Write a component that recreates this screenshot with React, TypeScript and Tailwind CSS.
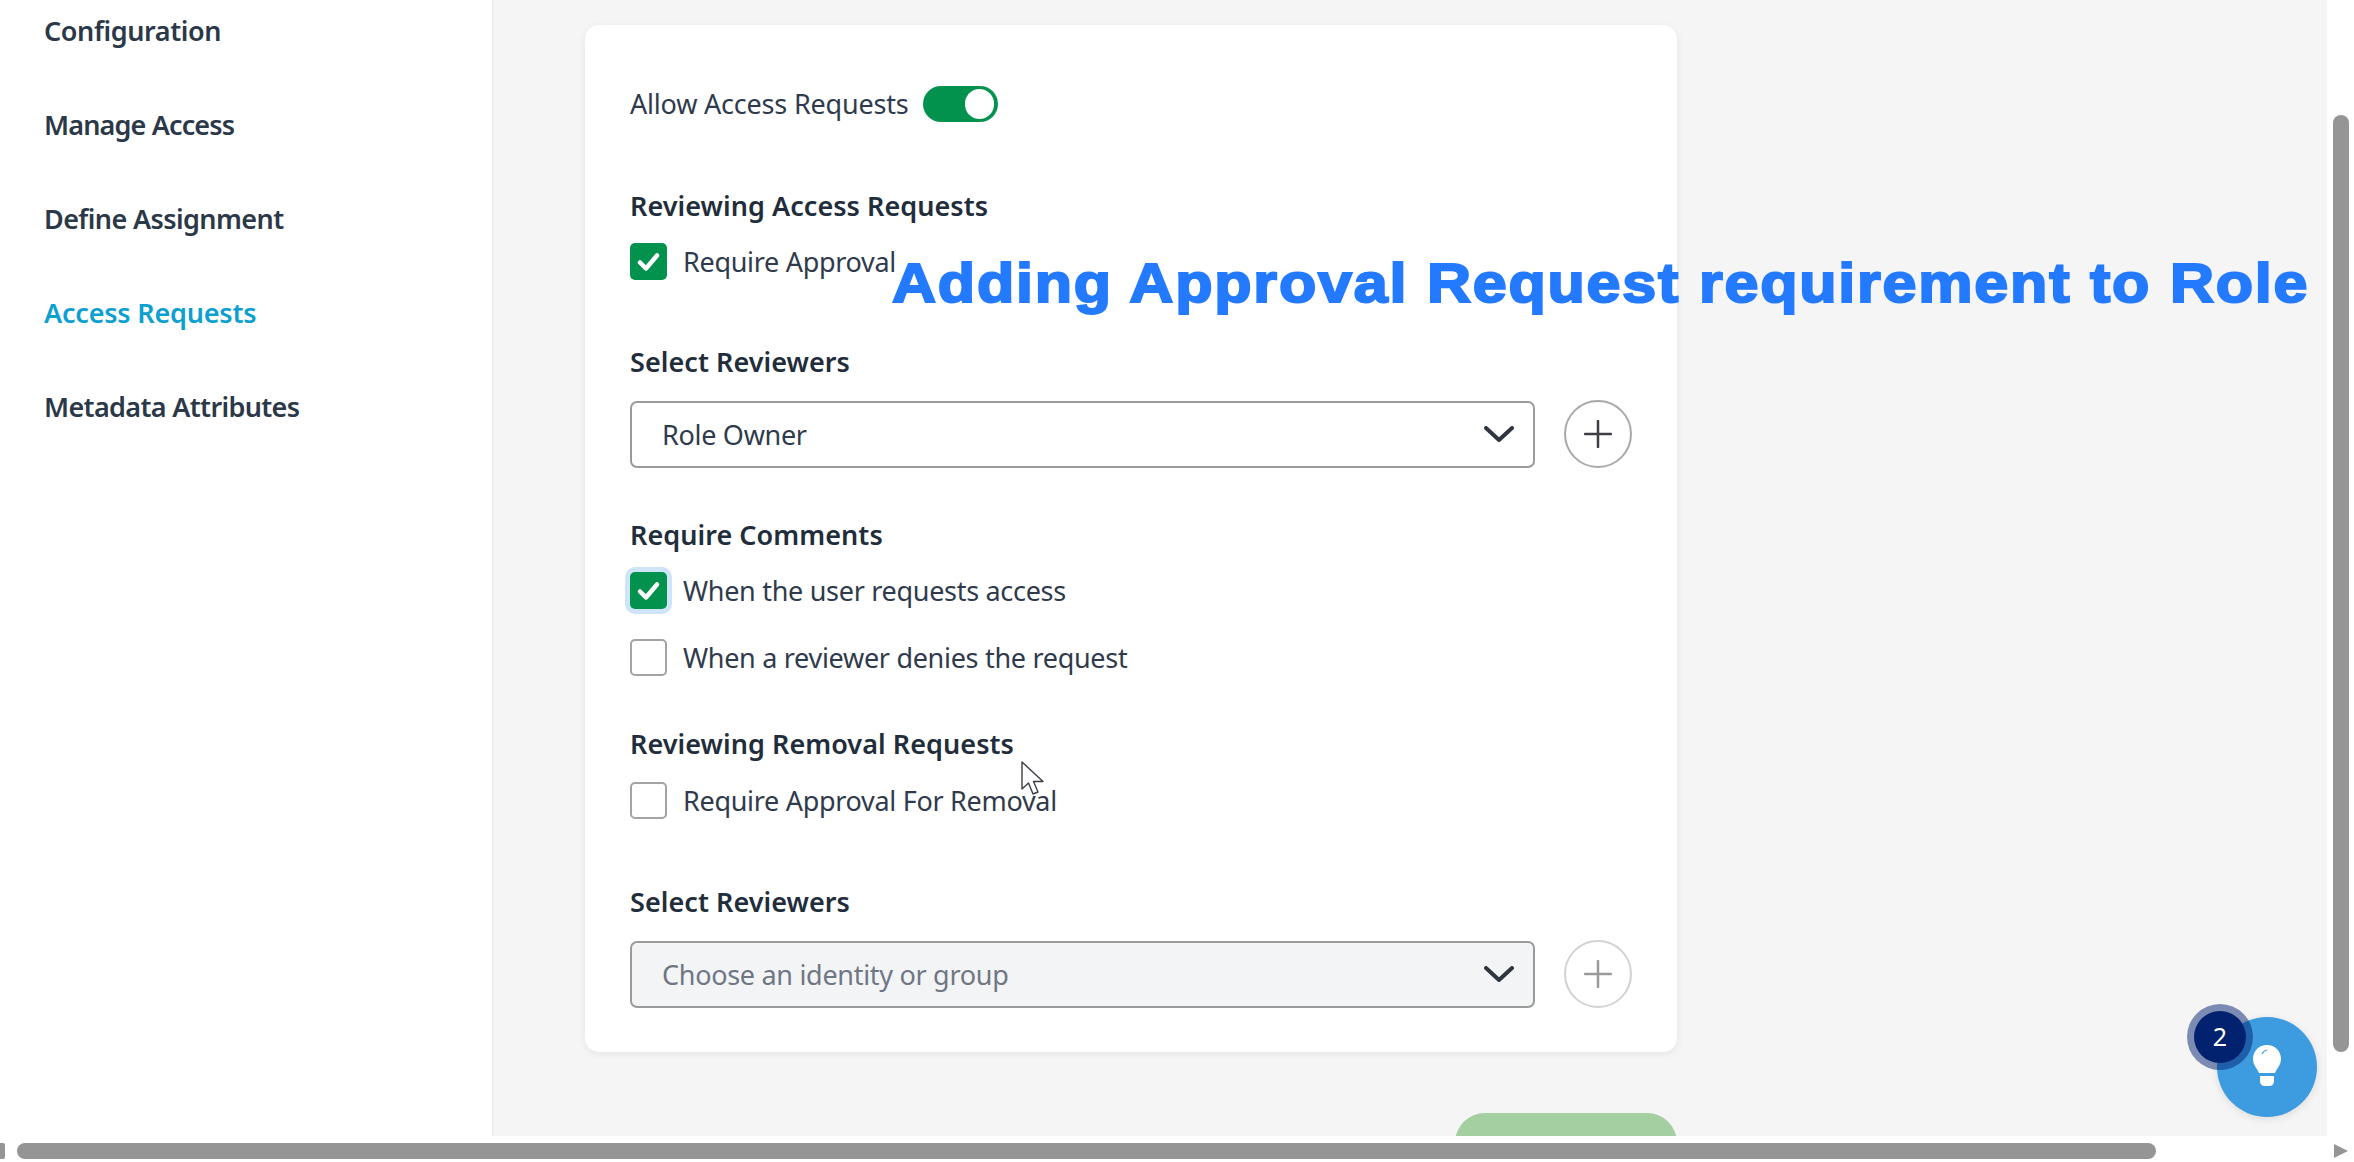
const font = { fontFamily: '"Noto Sans", sans-serif' };

function Check() {
  return (
    <svg viewBox="0 0 37 37" className="w-[37px] h-[37px]" fill="none">
      <path d="M10 19.5 L16 25.5 L27 12.5" stroke="#ffffff" strokeWidth="4.5" strokeLinecap="round" strokeLinejoin="round" />
    </svg>
  );
}

function CheckRow({ label, checked, focused, className }: { label: string; checked?: boolean; focused?: boolean; className: string }) {
  return (
    <div className={`flex items-center h-[37px] ${className}`}>
      <div
        className={`w-[37px] h-[37px] shrink-0 rounded-[5px] ${checked ? "bg-[#03924e]" : "border-2 border-[#a3a3a3] bg-white"} ${focused ? "ring-[5px] ring-[#cfe4f6]" : ""}`}
      >
        {checked ? <Check /> : null}
      </div>
      <span className="ml-[16px] text-[27px] leading-[34px] tracking-[-0.3px] text-[#2f3b4c] whitespace-nowrap">{label}</span>
    </div>
  );
}

function Heading({ children, className }: { children: string; className: string }) {
  return <div className={`h-[36px] leading-[36px] text-[27px] font-semibold tracking-[0.05px] text-[#222d3b] whitespace-nowrap ${className}`}>{children}</div>;
}

function SelectRow({ value, disabled, className }: { value: string; disabled?: boolean; className: string }) {
  return (
    <div className={`flex items-center ${className}`}>
      <div className={`w-[905px] h-[67px] rounded-[7px] border-2 border-[#9b9b9b] flex items-center justify-between pl-[30px] pr-[19px] ${disabled ? "bg-[#f3f4f6]" : "bg-white"}`}>
        <span className={`pt-[2px] text-[27px] tracking-[-0.3px] ${disabled ? "text-[#6f7785]" : "text-[#2f3b4c]"}`}>{value}</span>
        <svg viewBox="0 0 30 16" className="w-[30px] h-[16px]" fill="none">
          <path d="M2 2 L15 14 L28 2" stroke="#2f3640" strokeWidth="4" strokeLinecap="round" strokeLinejoin="round" />
        </svg>
      </div>
      <div className={`ml-[29px] w-[68px] h-[68px] rounded-full border-2 flex items-center justify-center bg-white ${disabled ? "border-[#d2d2d2]" : "border-[#a9a9a9]"}`}>
        <svg viewBox="0 0 28 28" className="w-[28px] h-[28px]" fill="none">
          <path d="M14 1 V27 M1 14 H27" stroke={disabled ? "#9a9a9a" : "#3d3f44"} strokeWidth="2.5" strokeLinecap="round" />
        </svg>
      </div>
    </div>
  );
}

function NavItem({ label, className }: { label: string; className: string }) {
  return (
    <div className={`h-[44px] leading-[44px] text-[27px] font-semibold whitespace-nowrap ${className}`}>
      {label}
    </div>
  );
}

export default function App() {
  return (
    <div className="relative w-[2354px] h-[1162px] overflow-hidden bg-white flex flex-col" style={font}>
      <div className="flex h-[1136px] shrink-0">
        <aside className="w-[493px] shrink-0 bg-white border-r border-[#e6e6e6] pl-[44px] pt-[9px] flex flex-col gap-[50px] h-[1136px]">
          <NavItem label="Configuration" className="tracking-[-0.4px] text-[#2b3848]" />
          <NavItem label="Manage Access" className="tracking-[-0.85px] text-[#2b3848]" />
          <NavItem label="Define Assignment" className="tracking-[-0.6px] text-[#2b3848]" />
          <NavItem label="Access Requests" className="tracking-[-0.2px] text-[#0c9fcf]" />
          <NavItem label="Metadata Attributes" className="tracking-[-0.65px] text-[#2b3848]" />
        </aside>

        <main className="flex-1 bg-[#f5f5f6] pl-[92px] pt-[25px] overflow-hidden">
          <div className="w-[1092px] bg-white rounded-[14px] shadow-[0_2px_8px_rgba(0,0,0,0.07)] pl-[45px] pt-[61px] pb-[44px]">
            <div className="flex items-center h-[36px]">
              <span className="text-[27px] leading-[34px] tracking-[-0.2px] text-[#2f3b4c] whitespace-nowrap">Allow Access Requests</span>
              <div className="ml-[15px] w-[75px] h-[36px] rounded-full bg-[#03924e] flex items-center justify-end pr-[4px]">
                <div className="w-[29px] h-[30px] rounded-full bg-white" />
              </div>
            </div>

            <Heading className="mt-[66px]">Reviewing Access Requests</Heading>
            <CheckRow className="mt-[19px]" label="Require Approval" checked />

            <Heading className="mt-[64px]">Select Reviewers</Heading>
            <SelectRow className="mt-[20px]" value="Role Owner" />

            <Heading className="mt-[49px]">Require Comments</Heading>
            <CheckRow className="mt-[19px]" label="When the user requests access" checked focused />
            <CheckRow className="mt-[30px]" label="When a reviewer denies the request" />

            <Heading className="mt-[50px]">Reviewing Removal Requests</Heading>
            <CheckRow className="mt-[20px]" label="Require Approval For Removal" />

            <Heading className="mt-[65px]">Select Reviewers</Heading>
            <SelectRow className="mt-[20px]" value="Choose an identity or group" disabled />
          </div>
          <div className="mt-[61px] ml-[870px] w-[222px] h-[60px] rounded-t-[30px] bg-[#a4cfa1]" />
        </main>

        <div className="w-[27px] shrink-0 bg-white pl-[6px] pt-[115px]">
          <div className="w-[16px] h-[937px] rounded-full bg-[#959595]" />
        </div>
      </div>

      <div className="h-[26px] bg-white pt-[7px] flex items-start relative">
        <div className="w-[5px] h-[16px] rounded-r-[2px] bg-[#959595]" />
        <div className="ml-[12px] w-[2139px] h-[16px] rounded-full bg-[#959595]" />
        <svg viewBox="0 0 14 16" className="ml-[178px] w-[14px] h-[16px]">
          <path d="M0 1 L14 8 L0 15 Z" fill="#959595" />
        </svg>
      </div>

      <div
        className="absolute left-[892px] top-[245px] text-[55px] leading-[76px] font-bold tracking-[1.6px] text-[#247aff] whitespace-nowrap origin-left scale-x-[1.11] [-webkit-text-stroke:2px_#247aff]"
        style={{ fontFamily: '"Liberation Sans", Arial, sans-serif' }}
      >
        Adding Approval Request requirement to Role
      </div>

      <svg viewBox="0 0 26 36" className="absolute left-[1021px] top-[761px] w-[26px] h-[36px]" fill="#ffffff">
        <path d="M1 1 V28 L7.5 22 L12 33 L17 31 L12.5 20.5 L22 20.5 Z" stroke="#3a3f46" strokeWidth="1.4" strokeLinejoin="round" />
      </svg>

      <div className="absolute left-[2217px] top-[1017px] w-[100px] h-[100px] rounded-full bg-[#3d9be0] shadow-[0_2px_8px_rgba(0,0,0,0.1)] flex items-center justify-center">
        <svg viewBox="0 0 28 42" className="w-[28px] h-[42px] -mt-[3px]">
          <path d="M14 0 C6 0 0 6 0 14 C0 20 4 23 6 28 H22 C24 23 28 20 28 14 C28 6 22 0 14 0 Z" fill="#ffffff" />
          <path d="M7 31 H21 V36 Q21 41 16 41 H12 Q7 41 7 36 Z" fill="#ffffff" />
          <path d="M9 9 Q10 6 14 5" stroke="#3d9be0" strokeWidth="1.2" fill="none" />
        </svg>
      </div>
      <div className="absolute left-[2194px] top-[1011px] w-[52px] h-[52px] rounded-full bg-[#02226f] ring-[7px] ring-[#02226f]/50 flex items-center justify-center text-white text-[25px]">
        2
      </div>
    </div>
  );
}
